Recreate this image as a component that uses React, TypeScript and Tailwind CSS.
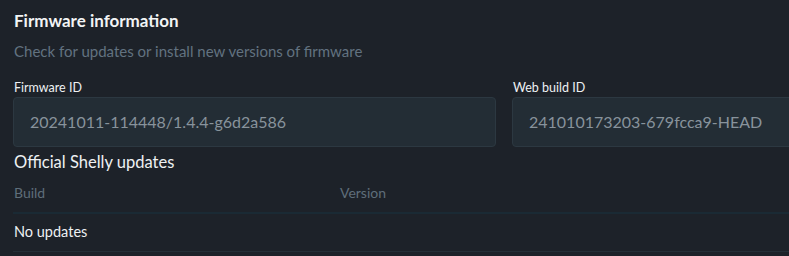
export default function App() {
  const font = { fontFamily: "Lato, 'Noto Sans', sans-serif" };
  return (
    <div className="h-[256px] w-[789px] overflow-hidden bg-[#1d2229]" style={font}>
      <div className="w-[1010px] px-[13px] pt-[9px]">
        <h1 className="pl-[1px] text-[17px] font-bold leading-[24px] text-[#f2f4f5]">Firmware information</h1>
        <p className="mt-[8px] pl-[1px] text-[15px] leading-[20px] text-[#627280]">
          Check for updates or install new versions of firmware
        </p>
        <div className="mt-[19px] grid grid-cols-[483px_483px] gap-[16px]">
          {[
            ["Firmware ID", "20241011-114448/1.4.4-g6d2a586"],
            ["Web build ID", "241010173203-679fcca9-HEAD"],
          ].map(([label, value]) => (
            <div key={label}>
              <div className="pl-[1px] text-[12.5px] leading-[16px] text-[#eef1f3]">{label}</div>
              <div className="mt-[1px] flex h-[50px] items-center rounded-[4px] border border-[#2c3841] bg-[#232d35] px-[16px] text-[16px] text-[#88939c]">
                {value}
              </div>
            </div>
          ))}
        </div>
        <h2 className="mt-[4px] pl-[1px] text-[16.5px] leading-[22px] text-[#eef1f3]">Official Shelly updates</h2>
        <div className="mt-[10px] grid grid-cols-[326px_1fr] border-b-2 border-[#1a2a34] pb-[9px] pl-[1px] text-[14px] leading-[20px] text-[#5f6e7a]">
          <div>Build</div>
          <div>Version</div>
        </div>
        <div className="border-b border-[#252f37] pb-[9px] pl-[1px] pt-[8px] text-[14.5px] leading-[20px] text-[#eef1f3]">No updates</div>
      </div>
    </div>
  );
}
